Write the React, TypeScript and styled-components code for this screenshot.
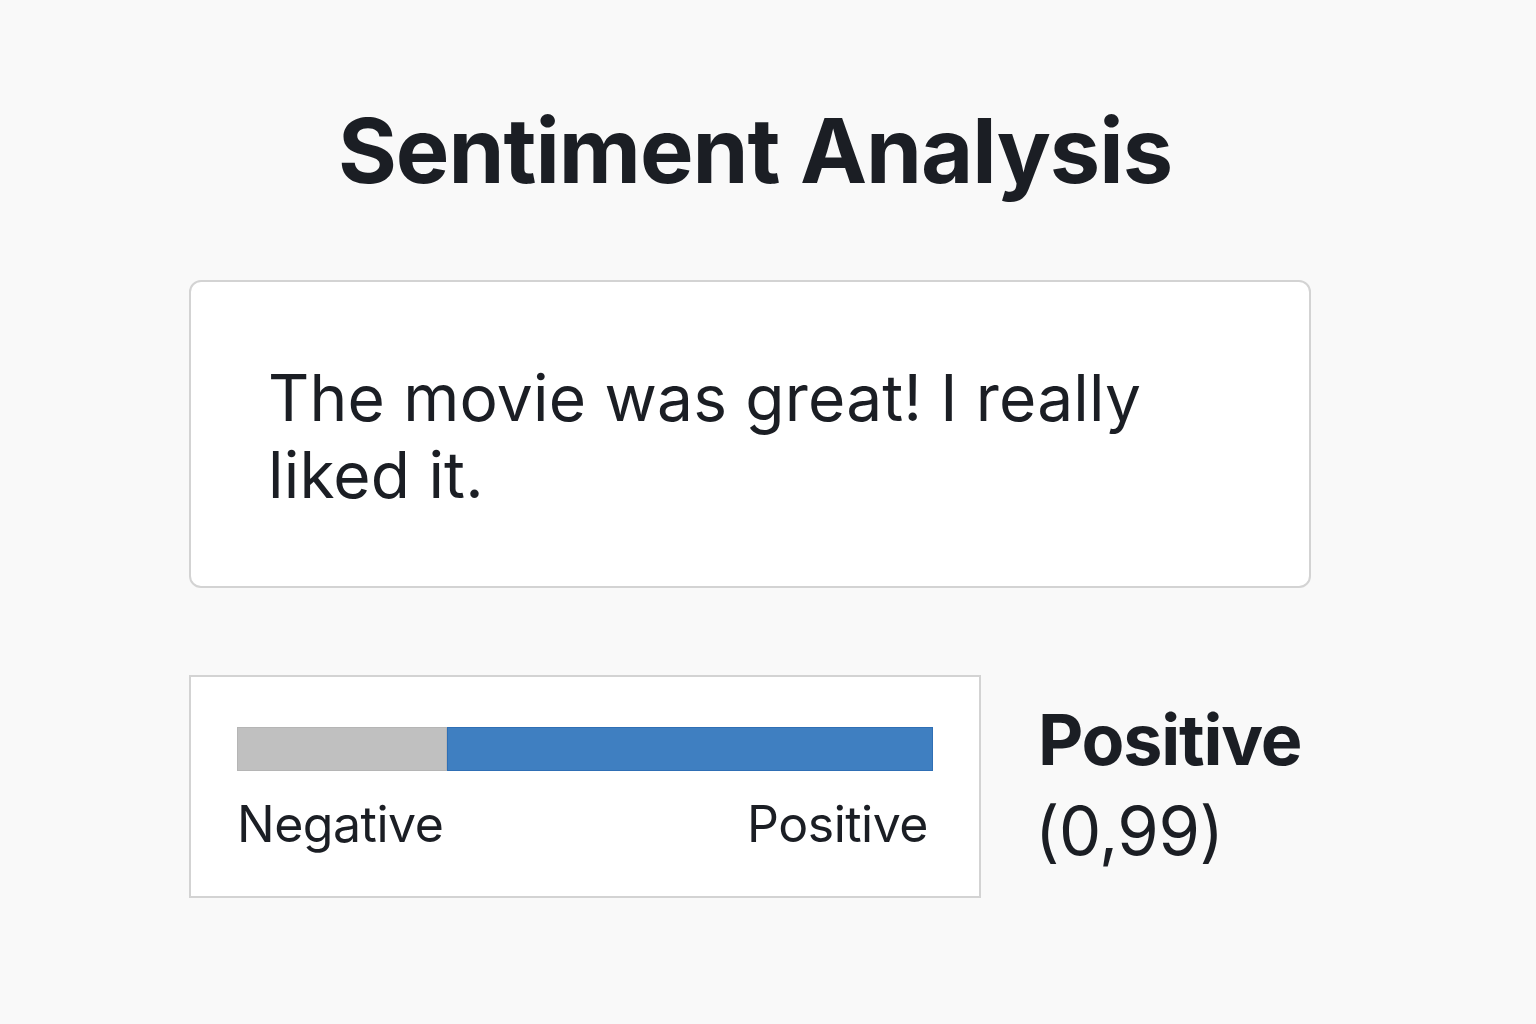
import React from "react";
import styled, { createGlobalStyle } from "styled-components";

const Global = createGlobalStyle`
  html, body { margin: 0; padding: 0; background: #f9f9f9; }
  body { font-family: Inter, "Noto Sans", sans-serif; color: #1b1e24; }
`;

const Page = styled.div`
  width: 1536px;
  height: 1024px;
  box-sizing: border-box;
  padding: 96px 0 0 189px;
`;

const Column = styled.div`
  width: 1122px;
  display: flex;
  flex-direction: column;
`;

const Title = styled.h1`
  margin: 0;
  font-size: 90px;
  font-weight: 700;
  line-height: 110px;
  text-align: center;
  letter-spacing: -1px;
  padding-left: 10px;
`;

const InputCard = styled.div`
  margin-top: 74px;
  box-sizing: border-box;
  height: 308px;
  background: #ffffff;
  border: 2px solid #d3d3d3;
  border-radius: 12px;
  padding: 77px 140px 0 77px;
`;

const InputText = styled.p`
  margin: 0;
  font-size: 64px;
  font-weight: 400;
  line-height: 77px;
  letter-spacing: 0.2px;
`;

const ResultRow = styled.div`
  margin-top: 87px;
  display: flex;
  align-items: flex-start;
  gap: 57px;
`;

const MeterBox = styled.div`
  width: 792px;
  height: 223px;
  box-sizing: border-box;
  background: #ffffff;
  border: 2px solid #d3d3d3;
  padding: 50px 46px 0 46px;
`;

const Bar = styled.div`
  display: flex;
  width: 696px;
  height: 44px;
`;

const Segment = styled.div<{ $color: string; $edge: string }>`
  height: 100%;
  box-sizing: border-box;
  background: ${(p) => p.$color};
  border: 1px solid ${(p) => p.$edge};
`;

const Labels = styled.div`
  margin-top: 23px;
  width: 691px;
  display: flex;
  justify-content: space-between;
  font-size: 50px;
  font-weight: 400;
  line-height: 61px;
  letter-spacing: -0.5px;
`;

const Verdict = styled.div`
  display: flex;
  flex-direction: column;
  padding-top: 22px;
`;

const VerdictLabel = styled.div`
  font-size: 70px;
  font-weight: 700;
  line-height: 85px;
  letter-spacing: -1.2px;
`;

const VerdictScore = styled.div`
  font-size: 67px;
  font-weight: 400;
  line-height: 85px;
  letter-spacing: -0.5px;
  margin-top: 6px;
  margin-left: -3px;
`;

export default function App() {
  const score = 0.698;
  return (
    <>
      <Global />
      <Page>
        <Column>
          <Title>Sentiment Analysis</Title>
          <InputCard>
            <InputText>The movie was great! I really liked it.</InputText>
          </InputCard>
          <ResultRow>
            <MeterBox>
              <Bar>
                <Segment $color="#c0c0c0" $edge="#b5b5b5" style={{ width: `${(1 - score) * 100}%` }} />
                <Segment $color="#3f7fc1" $edge="#2f6fb5" style={{ width: `${score * 100}%` }} />
              </Bar>
              <Labels>
                <span>Negative</span>
                <span>Positive</span>
              </Labels>
            </MeterBox>
            <Verdict>
              <VerdictLabel>Positive</VerdictLabel>
              <VerdictScore>(0,99)</VerdictScore>
            </Verdict>
          </ResultRow>
        </Column>
      </Page>
    </>
  );
}
